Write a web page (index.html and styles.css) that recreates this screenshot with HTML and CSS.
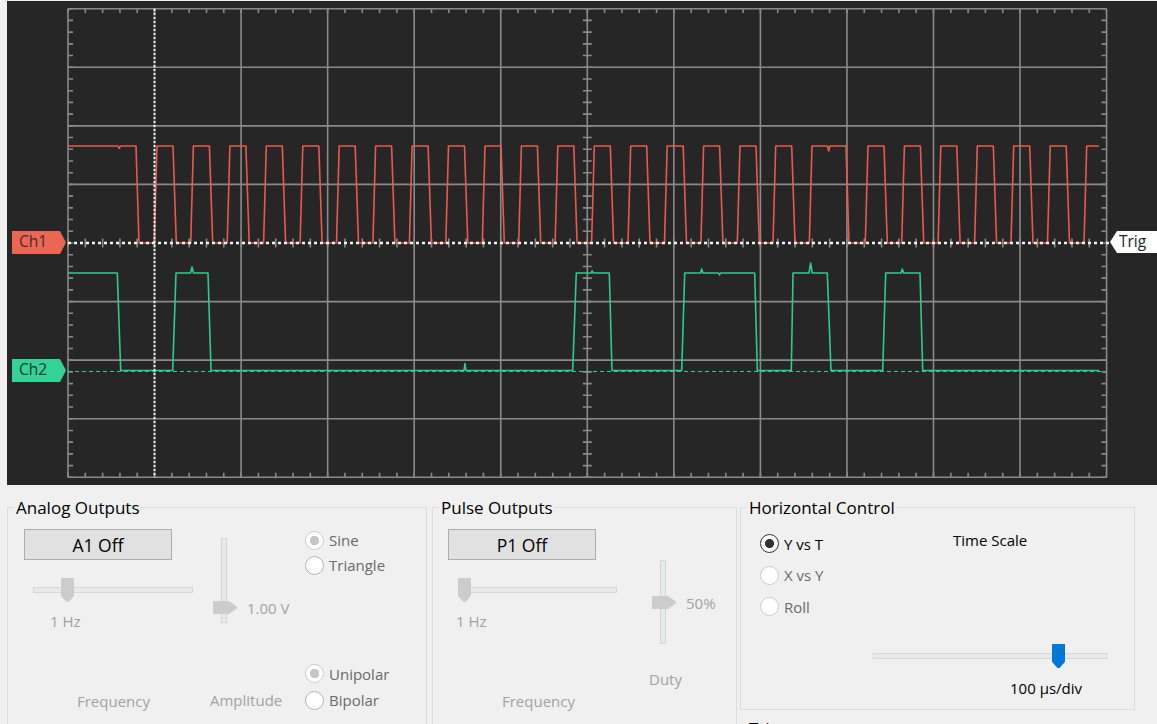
FILE: index.html
```html
<!DOCTYPE html>
<html>
<head>
<meta charset="utf-8">
<link rel="stylesheet" href="styles.css">
</head>
<body>
<div class="scope">
<svg width="1150" height="484" viewBox="7 1 1150 484" xmlns="http://www.w3.org/2000/svg">
  <g class="grid" stroke="#8a8a8a" stroke-width="1.6" fill="none">
    <line x1="68" y1="8.7" x2="68" y2="477.3"/>
    <line x1="241.1" y1="8.7" x2="241.1" y2="477.3"/>
    <line x1="327.65" y1="8.7" x2="327.65" y2="477.3"/>
    <line x1="414.2" y1="8.7" x2="414.2" y2="477.3"/>
    <line x1="500.75" y1="8.7" x2="500.75" y2="477.3"/>
    <line x1="587.3" y1="8.7" x2="587.3" y2="477.3"/>
    <line x1="673.85" y1="8.7" x2="673.85" y2="477.3"/>
    <line x1="760.4" y1="8.7" x2="760.4" y2="477.3"/>
    <line x1="846.95" y1="8.7" x2="846.95" y2="477.3"/>
    <line x1="933.5" y1="8.7" x2="933.5" y2="477.3"/>
    <line x1="1020.05" y1="8.7" x2="1020.05" y2="477.3"/>
    <line x1="1106.6" y1="8.7" x2="1106.6" y2="477.3"/>
    <line x1="68" y1="8.7" x2="1106.6" y2="8.7"/>
    <line x1="68" y1="67.3" x2="1106.6" y2="67.3"/>
    <line x1="68" y1="125.85" x2="1106.6" y2="125.85"/>
    <line x1="68" y1="184.4" x2="1106.6" y2="184.4"/>
    <line x1="68" y1="301.6" x2="1106.6" y2="301.6"/>
    <line x1="68" y1="360.15" x2="1106.6" y2="360.15"/>
    <line x1="68" y1="418.7" x2="1106.6" y2="418.7"/>
    <line x1="68" y1="477.3" x2="1106.6" y2="477.3"/>
  </g>
  <g class="ticks" stroke="#8a8a8a" fill="none">
    <line x1="67.2" y1="10.9" x2="1106" y2="10.9" stroke-width="4.4" stroke-dasharray="1.6 15.71"/>
    <line x1="67.2" y1="475" x2="1106" y2="475" stroke-width="4.6" stroke-dasharray="1.6 15.71"/>
    <line x1="67.2" y1="243" x2="1106" y2="243" stroke-width="9" stroke-dasharray="1.6 15.71"/>
    <line x1="70.5" y1="7.9" x2="70.5" y2="478" stroke-width="5" stroke-dasharray="1.6 10.115"/>
    <line x1="1104" y1="7.9" x2="1104" y2="478" stroke-width="5" stroke-dasharray="1.6 10.115"/>
    <line x1="587.3" y1="7.9" x2="587.3" y2="478" stroke-width="9" stroke-dasharray="1.6 10.115"/>
  </g>
  <path class="ch1" fill="none" stroke="#e95a4b" stroke-width="1.6" stroke-linejoin="round" d="M68,146 H118 l1.2,2.5 l1.2,-2.5 H136 L139,243
    H154.3 l2.7,-97 h16 l3.3,97
    H190.7 l2.7,-97 h16 l3.3,97
    H227.2 l2.7,-97 h16 l3.3,97
    H263.6 l2.7,-97 h16 l3.3,97
    H300.1 l2.7,-97 h16 l3.3,97
    H336.5 l2.7,-97 h16 l3.3,97
    H372.9 l2.7,-97 h16 l3.3,97
    H409.4 l2.7,-97 h16 l3.3,97
    H445.8 l2.7,-97 h16 l3.3,97
    H482.3 l2.7,-97 h16 l3.3,97
    H518.7 l2.7,-97 h16 l3.3,97
    H555.1 l2.7,-97 h16 l3.3,97
    H591.6 l2.7,-97 h16 l3.3,97
    H628 l2.7,-97 h16 l3.3,97
    H664.5 l2.7,-97 h16 l3.3,97
    H700.9 l2.7,-97 h16 l3.3,97
    H737.3 l2.7,-97 h16 l3.3,97
    H773 l2.7,-97 h16 l3.3,97
    H809.3 l2.7,-97 H827.5 l1.2,5 l1.2,-5 H846 l3,97
    H865.3 l2.7,-97 h16 l3.3,97
    H901.7 l2.7,-97 h16 l3.3,97
    H938.1 l2.7,-97 h16 l3.3,97
    H974.6 l2.7,-97 h16 l3.3,97
    H1011 l2.7,-97 h16 l3.3,97
    H1047.5 l2.7,-97 h16 l3.3,97
    H1084 l2.7,-97 H1099"/>
  <line x1="68" y1="371.5" x2="1106" y2="371.5" stroke="#2dcc8c" stroke-width="1.2" stroke-dasharray="4 3"/>
  <path class="ch2" fill="none" stroke="#2dcc8c" stroke-width="1.6" stroke-linejoin="round" d="M68,273 H117.3 L120.7,370.5 H172.7 L176,273 H190.5 l1.5,-6 l1.5,6 H208 L211,370.5 H464 l1,-7 l1,7 H572.7 L576.3,273 H591 l1.2,-2 l1.2,2 H609.3 L612,370.5 H681.7 L684.7,273 H700.5 l1.2,-4 l1.2,4 H718.5 l1,2 l1,-2 H754.7 L757.3,370.5 H791.3 L793,273 H809 l1.6,-10 l1.6,10 H827.3 L831,370.5 H882.7 L885.7,273 H901 l1.3,-4 l1.3,4 H920 L922.7,370.5 H1099"/>
  <line x1="68" y1="243" x2="1110" y2="243" stroke="#f2f2f2" stroke-width="2.5" stroke-dasharray="3 3"/>
  <line x1="154.5" y1="8.7" x2="154.5" y2="477.3" stroke="#f2f2f2" stroke-width="2" stroke-dasharray="2.5 1.5"/>
  <g class="labels" font-family="Open Sans, Noto Sans, sans-serif" font-size="15.5">
    <polygon points="12,231 60,231 66,242.5 60,254 12,254" fill="#eb6753"/>
    <text x="19" y="247" fill="#3a3030">Ch1</text>
    <polygon points="12,359 60,359 66,370.5 60,382 12,382" fill="#33d296"/>
    <text x="19" y="374.5" fill="#24352e">Ch2</text>
    <polygon points="1110,242 1117,231 1158,231 1158,253 1117,253" fill="#ffffff"/>
    <text x="1119" y="247" fill="#1e1e2a">Trig</text>
  </g>
</svg>
</div>

<div class="panel">
  <div class="group g-analog">
    <div class="g-title">Analog Outputs</div>
    <div class="g-body">
      <div class="col a-col1">
        <div class="btn">A1 Off</div>
        <div class="hslider a-hs"><div class="thumb-h a-th"></div></div>
        <div class="val a-hz">1 Hz</div>
        <div class="val a-freq">Frequency</div>
      </div>
      <div class="col a-col2">
        <div class="vrow">
          <div class="vslider a-vs"><div class="thumb-v a-tv"></div></div>
          <div class="val a-volt">1.00 V</div>
        </div>
        <div class="val a-amp">Amplitude</div>
      </div>
      <div class="col a-col3">
        <div class="radio r-first"><span class="rb rb-on-dis"></span><span>Sine</span></div>
        <div class="radio"><span class="rb rb-en"></span><span>Triangle</span></div>
        <div class="radio r-gap"><span class="rb rb-on-dis"></span><span>Unipolar</span></div>
        <div class="radio r-tall"><span class="rb rb-en"></span><span>Bipolar</span></div>
      </div>
    </div>
  </div>

  <div class="group g-pulse">
    <div class="g-title">Pulse Outputs</div>
    <div class="g-body">
      <div class="col p-col1">
        <div class="btn">P1 Off</div>
        <div class="hslider p-hs"><div class="thumb-h"></div></div>
        <div class="val p-hz">1 Hz</div>
        <div class="val p-freq">Frequency</div>
      </div>
      <div class="col p-col2">
        <div class="vrow">
          <div class="vslider p-vs"><div class="thumb-v p-tv"></div></div>
          <div class="val p-pct">50%</div>
        </div>
        <div class="val p-duty">Duty</div>
      </div>
    </div>
  </div>

  <div class="right-stack">
    <div class="group g-horiz">
      <div class="g-title">Horizontal Control</div>
      <div class="g-body">
        <div class="col h-col1">
          <div class="radio h-r1"><span class="rb rb-on"></span><span class="txt-on">Y vs T</span></div>
          <div class="radio h-r"><span class="rb rb-dis"></span><span>X vs Y</span></div>
          <div class="radio h-r"><span class="rb rb-dis"></span><span>Roll</span></div>
        </div>
        <div class="col h-col2">
          <div class="lbl h-ts">Time Scale</div>
          <div class="hslider h-hs"><div class="thumb-h thumb-blue h-th"></div></div>
          <div class="lbl h-val">100 µs/div</div>
        </div>
      </div>
    </div>
    <div class="group g-trigger">
      <div class="g-title">Trigger</div>
    </div>
  </div>
</div>
</body>
</html>
```

FILE: styles.css
```css
* { box-sizing: border-box; }
html, body { margin: 0; padding: 0; }
body {
  width: 1157px;
  height: 724px;
  overflow: hidden;
  background: #f0f0f0;
  font-family: "Open Sans", "Noto Sans", "DejaVu Sans", sans-serif;
  color: #000;
}

.scope {
  margin: 1px 0 0 7px;
  height: 484px;
  background: #262626;
}
.scope svg { display: block; }

.panel {
  display: flex;
  align-items: flex-start;
  height: 239px;
}

.group {
  border: 1px solid #dcdcdc;
  margin-top: 22px;
}
.g-title {
  margin: -12px 0 0 6px;
  padding: 0 2px;
  width: max-content;
  background: #f0f0f0;
  font-size: 17px;
  line-height: 23px;
  white-space: nowrap;
}
.g-analog { margin-left: 7px; width: 420px; height: 260px; }
.g-pulse { margin-left: 5px; width: 305px; height: 260px; }
.right-stack { margin-left: 3px; width: 395px; }
.g-horiz { height: 203px; }
.g-trigger { margin-top: 18px; height: 100px; }

.g-body { display: flex; align-items: flex-start; }
.col { display: flex; flex-direction: column; align-items: flex-start; }

.btn {
  width: 148px;
  height: 31px;
  margin-top: 10px;
  border: 1px solid #adadad;
  background: #e1e1e1;
  display: flex;
  align-items: center;
  justify-content: center;
  font-size: 17.5px;
  line-height: 20px;
}

.val {
  font-size: 15px;
  line-height: 20px;
  color: #a2a2a2;
  white-space: nowrap;
}
.lbl {
  font-size: 15px;
  line-height: 20px;
  color: #000;
  white-space: nowrap;
}

/* horizontal slider: track drawn as layered background */
.hslider {
  height: 24px;
  display: flex;
  background:
    linear-gradient(#e7eaea, #e7eaea) center / calc(100% - 2px) 4px no-repeat,
    linear-gradient(#d6d6d6, #d6d6d6) center / 100% 6px no-repeat;
}
.thumb-h {
  width: 13px;
  height: 24px;
  background: #cccccc;
  clip-path: polygon(0 0, 100% 0, 100% 74%, 58% 100%, 42% 100%, 0 74%);
}
.thumb-blue { background: #0078d7; }

/* vertical slider */
.vslider {
  width: 24px;
  display: flex;
  flex-direction: column;
  background:
    linear-gradient(#e7eaea, #e7eaea) 9px 1px / 4px calc(100% - 2px) no-repeat,
    linear-gradient(#d6d6d6, #d6d6d6) 8px 0 / 6px 100% no-repeat;
}
.thumb-v {
  width: 24px;
  height: 13px;
  background: #cccccc;
  clip-path: polygon(0 0, 67% 0, 100% 45%, 100% 55%, 67% 100%, 0 100%);
}
.vrow { display: flex; align-items: flex-start; }

/* radio buttons */
.radio {
  display: flex;
  align-items: center;
  gap: 5px;
  height: 25px;
  font-size: 15px;
  line-height: 20px;
  color: #6a6a6a;
  white-space: nowrap;
}
.rb {
  flex: none;
  width: 19px;
  height: 19px;
  border-radius: 50%;
  border: 1px solid #b4b4b4;
  background: #fff;
}
.rb-dis { border-color: #cccccc; }
.rb-on-dis {
  border-color: #cccccc;
  background: radial-gradient(circle, #c6c6c6 0 4.4px, #fff 5px);
}
.rb-on {
  border: 1.6px solid #333;
  background: radial-gradient(circle, #333 0 4.2px, #fff 4.8px);
}
.txt-on { color: #000; }

/* Analog Outputs layout */
.a-col1 { width: 202px; padding-left: 16px; }
.a-hs { margin-top: 18px; margin-left: 9px; width: 160px; }
.a-th { margin-left: 28px; }
.a-hz { margin-top: 9px; margin-left: 26px; }
.a-freq { margin-top: 60px; margin-left: 53px; }
.a-col2 { width: 94px; }
.a-vs { margin-top: 19px; margin-left: 3px; height: 85px; }
.a-tv { margin-top: 63px; }
.a-volt { margin-left: 10px; margin-top: 78.5px; }
.a-amp { margin-top: 67px; }
.a-col3 { padding-top: 8.5px; padding-left: 1px; }
.r-gap { margin-top: 83px; height: 26.5px; }
.r-tall { height: 26.5px; }

/* Pulse Outputs layout */
.p-col1 { width: 216px; padding-left: 15px; }
.p-hs { margin-top: 18px; margin-left: 10px; width: 159px; }
.p-hz { margin-top: 9px; margin-left: 8px; }
.p-freq { margin-top: 60px; margin-left: 54px; }
.p-vs { margin-top: 41px; margin-left: 3px; height: 84px; }
.p-tv { margin-top: 36px; }
.p-pct { margin-left: 10px; margin-top: 74px; }
.p-duty { margin-top: 25px; }

/* Horizontal Control layout */
.h-col1 { width: 132px; padding-left: 19px; }
.h-r1 { margin-top: 12px; }
.h-r { margin-top: 6.5px; }
.h-ts { margin-top: 11px; margin-left: 80px; }
.h-hs { margin-top: 94px; width: 234px; }
.h-th { margin-left: 179px; }
.h-val { margin-top: 10px; margin-left: 137px; }
```
